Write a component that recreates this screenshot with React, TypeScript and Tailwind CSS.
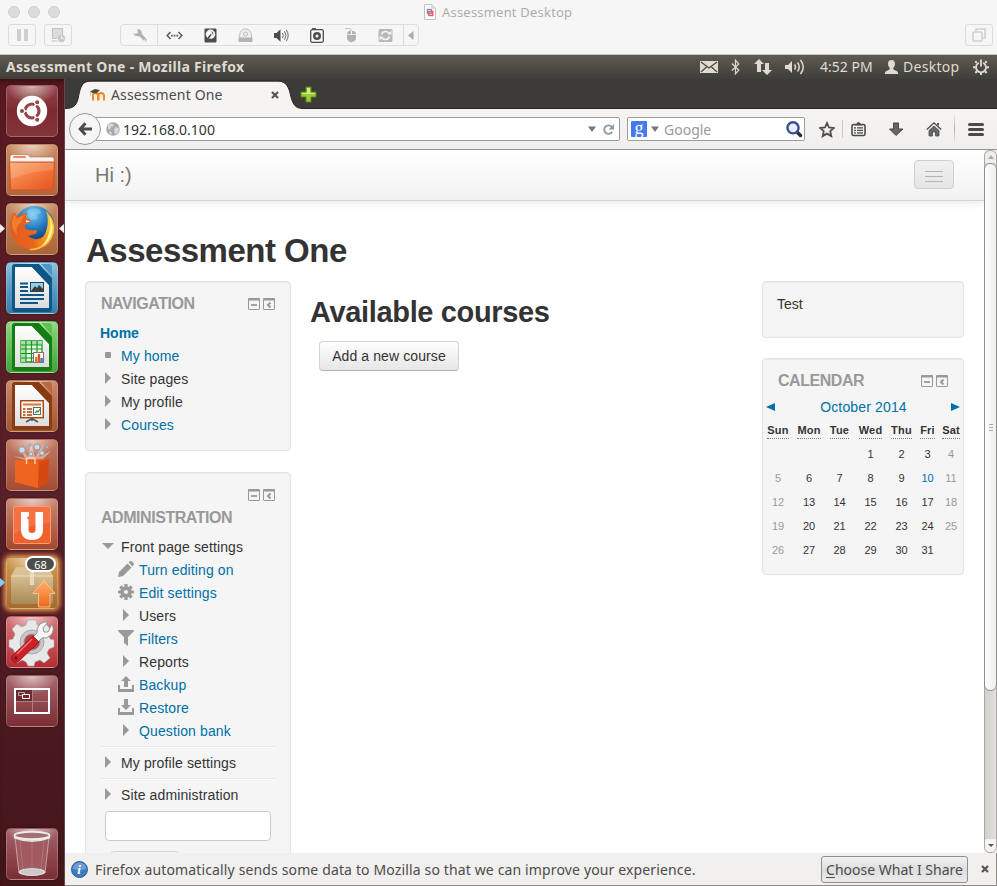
import React from 'react';

type Kids = { children?: React.ReactNode };

const ubuntu = "font-['Noto_Sans','Open_Sans',sans-serif]";

/* ---------- Virtual machine window chrome ---------- */

function MacHeader() {
  return (
    <header className="flex h-[55px] shrink-0 flex-col border-b border-[#c6c6c6] bg-[#f6f6f6]">
      <div className="flex h-[24px] items-center pb-px pl-2">
        <div className="flex gap-2">
          <i className="size-3 rounded-full border border-[#d0d0d0] bg-[#dcdcdc]" />
          <i className="size-3 rounded-full border border-[#d0d0d0] bg-[#dcdcdc]" />
          <i className="size-3 rounded-full border border-[#d0d0d0] bg-[#dcdcdc]" />
        </div>
        <div className="ml-[364px] flex items-center gap-[6px]">
          <svg width="12" height="16" viewBox="0 0 12 16">
            <path d="M.5.5h7.500l3.500 3.500v11.500H.5z" fill="#fafafa" stroke="#c4c4c4" />
            <path d="M8 .5v3.500h3.500" fill="#eee" stroke="#c4c4c4" />
            <rect x="3.500" y="5.500" width="4" height="4" fill="none" stroke="#6f93bb" strokeWidth="1.300" />
            <rect x="4.800" y="7.500" width="4" height="4" fill="none" stroke="#ff4b60" strokeWidth="1.300" />
          </svg>
          <span className="font-['Open_Sans',sans-serif] text-[13px] leading-[16px] tracking-[0.25px] text-[#a9a9a9]">
            Assessment Desktop
          </span>
        </div>
      </div>
      <div className="flex h-[22px] items-center px-2">
        <div className="flex h-[22px] w-[28px] items-center justify-center gap-[3px] rounded-[3px] border border-[#dcdcdc]">
          <i className="h-3 w-1 bg-[#cfcfcf]" />
          <i className="h-3 w-1 bg-[#cfcfcf]" />
        </div>
        <div className="ml-2 flex h-[22px] w-[28px] items-center justify-center rounded-[3px] border border-[#dcdcdc]">
          <svg width="16" height="16" viewBox="0 0 16 16">
            <path d="M3 2h9v6.500L8 11H3z" fill="#dcdcdc" />
            <path d="M12.500 8V1.500h-10V11.500H7" fill="none" stroke="#c4c4c4" strokeWidth="1.200" />
            <path d="M1.500 14h6" stroke="#ccc" strokeWidth="1.200" />
            <circle cx="11.500" cy="11.500" r="3.700" fill="#c8c8c8" />
            <path d="M11.500 9v2.800h2.200" fill="none" stroke="#f6f6f6" />
          </svg>
        </div>
        <div className="ml-[48px] flex h-[22px] w-[299px] items-center rounded-[4px] border border-[#dcdcdc]">
          <div className="flex h-full w-[37px] shrink-0 items-center justify-center border-r border-[#dcdcdc]">
            <svg width="15" height="15" viewBox="0 0 15 15">
              <path d="M5 1.500c2-.8 4.500.4 4.800 3l-.2 1.200 4.800 5.200c1 1.300-.8 3.200-2.200 2.200L7 7.900c-2.500.8-5.200-.4-5.800-2.700l2.900.7 2-1.700z" fill="#b2b2b2" />
              <circle cx="12.600" cy="12.300" r=".8" fill="#f6f6f6" />
            </svg>
          </div>
          <div className="flex w-[245px] shrink-0 items-center justify-between pl-[8px] pr-[10px]">
            <svg width="17" height="15" viewBox="0 0 17 15">
              <path d="M4.500 4L1.200 7.500 4.500 11M12.500 4l3.300 3.500-3.300 3.500" fill="none" stroke="#585858" strokeWidth="1.500" />
              <path d="M5 6.700h1.700v1.700H5zM7.700 6.700h1.700v1.700H7.700zM10.400 6.700h1.700v1.700h-1.700z" fill="#585858" />
            </svg>
            <svg width="13" height="15" viewBox="0 0 13 15">
              <rect x=".5" y=".5" width="12" height="14" rx="1" fill="#4d4d4d" />
              <circle cx="6.500" cy="6.200" r="4.700" fill="#f6f6f6" />
              <path d="M2 13l5-6.500M6 11l2 2" stroke="#4d4d4d" strokeWidth="1.600" />
              <path d="M8 3.500l1 3" stroke="#4d4d4d" strokeWidth="1" />
            </svg>
            <svg width="15" height="15" viewBox="0 0 15 15">
              <path d="M1.500 10C1.500 3.500 3.500 1 7.500 1s6 2.500 6 9" fill="#efefef" stroke="#bdbdbd" />
              <circle cx="7.500" cy="6" r="2" fill="none" stroke="#bdbdbd" />
              <rect x=".5" y="9.500" width="14" height="4.500" rx=".7" fill="#b5b5b5" />
            </svg>
            <svg width="16" height="15" viewBox="0 0 16 15">
              <path d="M1 5h2.500L7.500 1.200v12.600L3.500 10H1z" fill="#4d4d4d" />
              <path d="M9.500 5q1.600 2.500 0 5M11.500 3.300q3 4.200 0 8.400M13.200 1.800q4 5.700 0 11.400" fill="none" stroke="#666" />
            </svg>
            <svg width="14" height="15" viewBox="0 0 14 15">
              <rect x=".7" y="1.700" width="12.600" height="12.600" rx="1.500" fill="none" stroke="#4d4d4d" strokeWidth="1.300" />
              <path d="M2 .6h4" stroke="#4d4d4d" />
              <circle cx="7" cy="8" r="4" fill="#4d4d4d" />
              <circle cx="7" cy="8" r="1.500" fill="#f6f6f6" />
            </svg>
            <svg width="12" height="16" viewBox="0 0 12 16">
              <path d="M0 1.500h4q2 0 2.500 2.500" fill="none" stroke="#bdbdbd" />
              <path d="M2 8h9v3c0 5.500-9 5.500-9 0z" fill="#b2b2b2" />
              <path d="M2 7.200C2 5 3.500 3.800 6 3.800V7.200zM7 3.800c2.500 0 4 1.200 4 3.400H7z" fill="#b2b2b2" />
            </svg>
            <svg width="15" height="15" viewBox="0 0 15 15">
              <rect x=".5" y="1" width="14" height="13" rx="1.500" fill="#b8b8b8" />
              <path d="M3.500 6.500q.8-3 4-3 2.500 0 3.500 1.500M11.500 8.500q-.8 3-4 3-2.500 0-3.500-1.500" fill="none" stroke="#f6f6f6" strokeWidth="1.600" />
              <path d="M13.500 2.500v4h-4zM1.500 12.500v-4h4z" fill="#f6f6f6" />
            </svg>
          </div>
          <div className="flex h-full flex-1 items-center justify-center border-l border-[#dcdcdc]">
            <svg width="6" height="9" viewBox="0 0 6 9"><path d="M5.500 0v9L0 4.500z" fill="#adadad" /></svg>
          </div>
        </div>
        <div className="-mr-1 ml-auto flex h-[22px] w-[28px] items-center justify-center rounded-[3px] border border-[#dcdcdc]">
          <svg width="14" height="14" viewBox="0 0 14 14" fill="none" stroke="#cfcfcf" strokeWidth="1.600">
            <rect x="1" y="4" width="9" height="9" rx="1" />
            <path d="M4 3.500V1h9v9h-2.500" />
          </svg>
        </div>
      </div>
    </header>
  );
}

function UbuntuPanel() {
  return (
    <div className={`flex h-[24px] shrink-0 items-center bg-gradient-to-b from-[#5e5b52] to-[#3f3e39] pl-[6px] pr-[8px] text-[#dfdbd2] ${ubuntu}`}>
      <span className="whitespace-nowrap text-[14px] font-bold leading-[24px] tracking-[0.3px]">Assessment One - Mozilla Firefox</span>
      <svg className="ml-auto" width="18" height="12" viewBox="0 0 18 12">
        <rect width="18" height="12" fill="#dfdbd2" />
        <path d="M1 1l8 6 8-6M1 11l5.500-5M17 11l-5.500-5" fill="none" stroke="#48463f" strokeWidth="1.200" />
      </svg>
      <svg className="ml-[13px]" width="9" height="16" viewBox="0 0 9 16">
        <path d="M.8 4.500l7 6.500L4.500 14.800V1.200L7.800 5l-7 6.500" fill="none" stroke="#dfdbd2" strokeWidth="1.200" />
      </svg>
      <svg className="ml-[14px]" width="18" height="16" viewBox="0 0 18 16">
        <path d="M5 0l5 5H7v8H3V5H0zM13 16l-5-5h3V4h4v7h3z" fill="#dfdbd2" />
      </svg>
      <svg className="ml-[13px]" width="20" height="16" viewBox="0 0 20 16">
        <path d="M0 6h3l4-4v12l-4-4H0z" fill="#dfdbd2" />
        <path d="M9.500 5.500q2 2.500 0 5M12.500 3.500q3.500 4.500 0 9M15.500 1q5.500 7 0 14" fill="none" stroke="#dfdbd2" strokeWidth="1.500" />
      </svg>
      <span className="ml-[15px] w-[53px] whitespace-nowrap text-[14px] leading-[24px]">4:52 PM</span>
      <svg className="ml-[12px]" width="13" height="14" viewBox="0 0 13 14">
        <path d="M6.500 0C9 0 10 1.500 10 3.800 10 6 9 6.800 8.300 8c0 1.600.5 2 2.200 2.500 1.800.6 2.500 1.200 2.500 2.800v.7H0v-.7c0-1.600.7-2.200 2.500-2.800C4.200 10 4.700 9.600 4.700 8 4 6.800 3 6 3 3.800 3 1.500 4 0 6.500 0z" fill="#dfdbd2" />
      </svg>
      <span className="ml-[5px] w-[56px] whitespace-nowrap text-[14px] leading-[24px] tracking-[0.3px]">Desktop</span>
      <svg className="ml-[14px]" width="16" height="16" viewBox="0 0 16 16" fill="none" stroke="#dfdbd2">
        <path d="M5.800 3.800a5 5 0 1 0 4.400 0" strokeWidth="1.800" />
        <path d="M8 .5v7" strokeWidth="1.800" />
        <path d="M2.300 2.300l1.500 1.500M13.700 2.300l-1.500 1.500M0 8.300h2.500M13.500 8.300H16M2.300 14l1.700-1.700M13.700 14L12 12.300M8 16v-2.500" strokeWidth="2" />
      </svg>
    </div>
  );
}

/* ---------- Launcher ---------- */

function Tile({ className, children }: Kids & { className: string }) {
  return (
    <div className={`relative size-[52px] shrink-0 rounded-[5px] border border-white/20 bg-gradient-to-b shadow-[0_0_2px_rgba(0,0,0,0.5)] ${className}`}>
      <i className="absolute inset-x-0 top-0 h-[18px] rounded-t-[5px] bg-[radial-gradient(ellipse_at_top,rgba(255,255,255,0.6),rgba(255,255,255,0)_72%)]" />
      <svg className="absolute -left-px -top-px" width="52" height="52" viewBox="0 0 52 52">{children}</svg>
    </div>
  );
}

function Page({ dark, light }: { dark: string; light: string }) {
  return (
    <>
      <path d="M9 2h24l13 14v31q0 3-3 3H9q-3 0-3-3V5q0-3 3-3z" fill={dark} />
      <path d="M35 2h8q3 0 3 3v9z" fill={light} />
      <path d="M9 5h17l17 18v23H9z" fill="url(#paper)" />
      <path d="M26 5l17 18V19L30 4z" fill={dark} />
    </>
  );
}

function Launcher() {
  return (
    <aside className="relative flex w-[65px] shrink-0 flex-col gap-[7px] border-r border-[#65494f] bg-gradient-to-b from-[#59191f] via-[#58202a] to-[#421519] pb-[6px] pl-[6px] pt-[6px] shadow-[inset_0_5px_5px_-3px_rgba(0,0,0,0.5)]">
      <svg className="absolute" width="0" height="0">
        <defs>
          <linearGradient id="paper" x1="0" y1="0" x2="0" y2="1"><stop stopColor="#fff" /><stop offset="1" stopColor="#ddd" /></linearGradient>
          <linearGradient id="folder" x1="0" y1="0" x2="1" y2="1"><stop stopColor="#f8a86a" /><stop offset=".5" stopColor="#f3793e" /><stop offset="1" stopColor="#e5511d" /></linearGradient>
          <linearGradient id="fox" x1="0" y1="0" x2="1" y2="0"><stop stopColor="#e55b1c" /><stop offset=".6" stopColor="#ea641c" /><stop offset="1" stopColor="#f9a824" /></linearGradient>
          <radialGradient id="globe" cx=".45" cy=".2" r=".7"><stop stopColor="#7ccdf3" /><stop offset=".5" stopColor="#2a80c4" /><stop offset="1" stopColor="#123a78" /></radialGradient>
          <linearGradient id="box" x1="0" y1="0" x2="0" y2="1"><stop stopColor="#d8bd90" /><stop offset="1" stopColor="#a98a58" /></linearGradient>
          <linearGradient id="up" x1="0" y1="0" x2="0" y2="1"><stop stopColor="#ffb26b" /><stop offset="1" stopColor="#f0661d" /></linearGradient>
        </defs>
      </svg>
      <Tile className="from-[#93474b] via-[#7b2a30] to-[#84363b]">
        <circle cx="26" cy="26" r="15.200" fill="#fff" />
        <circle cx="26" cy="26" r="7" fill="none" stroke="#96454a" strokeWidth="3.200" />
        <path d="M26 26H12M26 26l7-12M26 26l7 12" stroke="#fff" strokeWidth="1.600" />
        <circle cx="26" cy="26" r="5" fill="#fff" />
        <g fill="#96454a" stroke="#fff" strokeWidth="1.100"><circle cx="16" cy="26" r="2.600" /><circle cx="31.200" cy="17.200" r="2.600" /><circle cx="31.200" cy="34.800" r="2.600" /></g>
      </Tile>
      <Tile className="from-[#c98b62] to-[#b4643a]">
        <path d="M4 13q0-2.500 2-2.500h15q2 0 3 2.500h22q2 0 2 2v8H4z" fill="#f6f4f2" stroke="#a65b39" strokeWidth=".5" />
        <rect x="7" y="12" width="13" height="2" rx="1" fill="#ee8a52" />
        <path d="M3.500 19q0-1 1-1h43q1 0 1 1l-1 25q0 2-2 2H6.500q-2 0-2-2z" fill="url(#folder)" stroke="#ce5528" />
        <path d="M4.500 19h43l-.4 7Q22 28 5.200 35z" fill="#fff" opacity=".15" />
      </Tile>
      <Tile className="from-[#c58a62] to-[#ad6538]">
        <circle cx="28.500" cy="22.500" r="19.500" fill="url(#globe)" />
        <path d="M22 7q6-3 11-1l2 4-5 2 2 4-7 1-4-4z" fill="#9adaf5" opacity=".4" />
        <path d="M40 8q10 9 8 21-3 13-15 17-6 2-10 1l8-8q8-4 10-14 2-9-1-17z" fill="#fbc02d" />
        <path d="M43 12q5 10 3 18-3 9-10 13 6-8 8-17 1-8-1-14z" fill="#fff49c" />
        <path d="M8 9l4 5q5-4 9-4l-1 5q4 1 5 4l-5 2q-3 2 0 5 4 2 10 1 2 2-1 4-4 1-7 2 6 5 13 2 5-3 8-9 0 11-8 17-11 6-22-1Q3 33 4 22q1-8 4-13z" fill="url(#fox)" />
        <path d="M8 11l3 5q5-4 9-4-4 3-5 7-6 5-4 13Q5 26 6 19z" fill="#f5923e" opacity=".6" />
        <path d="M20 17l4 1.500-4 1z" fill="#fff" />
      </Tile>
      <Tile className="from-[#88bdd7] to-[#337cac]">
        <Page dark="#0d5788" light="#4d97c3" />
        <path d="M14 21.500h8M14 25h8M14 29h8M14 33h24M14 37h24M14 41h18" stroke="#0d5788" strokeWidth="2" />
        <rect x="24.500" y="20.500" width="13" height="9" fill="#91d1ef" stroke="#124864" />
        <path d="M25 29l4-5 2 2 2-3 4 4v2z" fill="#443c2e" />
      </Tile>
      <Tile className="from-[#8bd67b] to-[#3ba53b]">
        <Page dark="#157d15" light="#5fc14f" />
        <path d="M15 20h21v21H15z" fill="#f1fff0" stroke="#169719" strokeWidth="1.300" />
        <path d="M15 20h21v4H15zM15 24h5v17h-5z" fill="#a8dfa2" />
        <path d="M15 24h21M15 28h21M15 32.500h21M15 37h21M20 20v21M25.500 20v21M31 20v21" stroke="#169719" strokeWidth="1.200" />
        <rect x="27.500" y="31.500" width="10" height="10" fill="#fff" stroke="#777" />
        <path d="M29 36h2.500v5H29z" fill="#e57d25" /><path d="M31.700 33h2.500v8h-2.500z" fill="#d8591b" /><path d="M34.300 37h2.500v4h-2.500z" fill="#2b83c4" />
      </Tile>
      <Tile className="from-[#c88766] to-[#a35631]">
        <Page dark="#8a3b12" light="#b8693f" />
        <rect x="14.700" y="20.700" width="22.600" height="17" fill="#fdf4ee" stroke="#a44411" strokeWidth="1.400" />
        <path d="M17 24.500h18" stroke="#cf7a46" strokeWidth="2" />
        <path d="M17 29h2.500M17 32h2.500M17 35h2.500M21 29h5M21 32h5M21 35h5" stroke="#a44411" strokeWidth="1.400" />
        <rect x="27.500" y="27.500" width="7" height="7" fill="#fff" stroke="#666" /><path d="M29 33l2-2 1 1 2-3" stroke="#2d9c35" strokeWidth="1.300" fill="none" />
        <path d="M26 38.500l-6 3.500M26 38.500l6 3.500M26 38v3" stroke="#555" strokeWidth="1.600" />
      </Tile>
      <Tile className="from-[#c37a64] to-[#a44b33]">
        <path d="M25 23L7 17l12 2-6-12 9 11 3-14 4 14 9-13-5 13 12-6-9 9z" fill="#fff" opacity=".4" />
        <g fill="#c9ddea" stroke="#85949e" strokeWidth=".8"><circle cx="16" cy="11" r="3.200" /><circle cx="31" cy="8" r="3" /><circle cx="36" cy="14" r="2.300" /><circle cx="25" cy="15" r="2" /><circle cx="24" cy="6" r="1.200" /><circle cx="41" cy="8" r="1.200" /></g>
        <path d="M9 21l34-1-1 23-10 6-23-6z" fill="#e8541b" />
        <path d="M9 21l24 2-1 26-23-6z" fill="#ef651f" />
        <path d="M33 23l10-3-1 23-10 6z" fill="#d4490f" />
        <path d="M20.500 25v-5q0-1 1-1h6q1.500 0 1.500 1.500V25" fill="none" stroke="#ffd2ae" strokeWidth="1.500" />
      </Tile>
      <Tile className="from-[#c98670] to-[#a4472f]">
        <rect x="7.500" y="8.500" width="37" height="37" rx="2" fill="#f2602c" stroke="#ff9c75" />
        <path d="M8 9h36v16Q25 26 8 36z" fill="#fff" opacity=".12" />
        <path d="M15 14h8v4l-2.500 2 2 1.500V32q0 3 3.500 3t3.500-3V14H37v17q0 11-11 11T15 31z" fill="#fff" />
      </Tile>
      <div className="relative">
        <Tile className="from-[#d49d59] to-[#a66a2a] shadow-[0_0_5px_2px_#ef9c4f]">
          <path d="M5 19h42v26q0 2-2 2H7q-2 0-2-2z" fill="url(#box)" />
          <path d="M10 10h32l5 9H5z" fill="#d9c294" />
          <path d="M5 19h42" stroke="#e9d9b8" />
          <path d="M24 10h4v18h-4z" fill="#efe4cd" opacity=".8" />
          <path d="M38 23.500l11 13h-5V50H32.500V36.500h-5.500z" fill="url(#up)" stroke="#fbd09b" strokeWidth=".8" />
        </Tile>
        <span className={`absolute -top-px left-[19px] flex h-[16px] w-[31px] items-center justify-center rounded-full border-2 border-white bg-[#4d4d4d] text-[11px] leading-none text-white ${ubuntu}`}>68</span>
      </div>
      <Tile className="from-[#d4767a] to-[#b52b33]">
        <path d="M22 4h8l1 5 4 2 5-3 5 6-3 4 2 5 4 1v7l-5 2-2 4 3 5-6 5-4-3-5 2-1 4h-6l-2-4-4-2-5 3-5-5 3-5-2-4-4-2v-7l4-1 2-5-3-5 5-5 5 3 4-2z" fill="#e8e8e8" stroke="#aaa" strokeWidth=".6" />
        <circle cx="26" cy="26" r="12" fill="#c8c8c8" stroke="#aaa" />
        <circle cx="26" cy="26" r="8" fill="#b7444b" stroke="#999" />
        <path d="M46 8q3 6-1 11-4 4-9 3l-6 6-5-5 6-6q-1-5 3-9 4-3 8-2l-5 6 1 4 4 0z" fill="#f7f7f7" stroke="#888" strokeWidth=".9" />
        <path d="M27 20l6 6-20 19q-3 3-6 0-3-3 0-6z" fill="#ce2127" stroke="#8c1015" strokeWidth=".8" />
        <path d="M26 23L11 38" stroke="#f1797b" strokeWidth="1.500" /><circle cx="10" cy="42" r="1.700" fill="#7e1014" />
      </Tile>
      <Tile className="from-[#a6666c] to-[#7c2d35]">
        <rect x="9" y="14" width="17" height="12" fill="#6e2930" />
        <path d="M26.500 14v24M9 26.500h34" stroke="#a98085" strokeWidth="1" />
        <rect x="9" y="14" width="34" height="24" fill="none" stroke="#fff" strokeWidth="2" />
        <path d="M12.500 17.500h6v3h-6z" fill="none" stroke="#aaa" /><path d="M16.500 19.500h7v4h-7z" fill="#6e2930" stroke="#fff" />
      </Tile>
      <div className="mt-auto">
        <Tile className="from-[#a3646a] to-[#7c2c34]">
          <path d="M9 9h34l-4 36q-13 5-26 0z" fill="#a05a60" stroke="#d2b4b6" strokeWidth=".8" />
          <path d="M14 12l3 29M38 12l-3 29M26 13v28" stroke="#c28b8f" opacity=".5" />
          <ellipse cx="26" cy="44" rx="13" ry="3.300" fill="#c9c9c7" stroke="#e2e2e2" />
          <path d="M8 7.500q18 8 36 0v3q-18 7-36 0z" fill="#deded9" />
          <ellipse cx="26" cy="7.500" rx="17.500" ry="3.600" fill="#a27173" stroke="#efefef" strokeWidth="1.800" />
        </Tile>
      </div>
      <svg className="absolute left-0 top-[144px]" width="65" height="11" viewBox="0 0 65 11"><path d="M0 1l5 4.500L0 10zM64 1l-5 4.500 5 4.500z" fill="#eee" /></svg>
      <svg className="absolute left-0 top-[498px]" width="6" height="11" viewBox="0 0 6 11"><path d="M0 1l5 4.500L0 10z" fill="#7fd0f3" /></svg>
    </aside>
  );
}

/* ---------- Firefox chrome ---------- */

function TabStrip() {
  return (
    <div className="relative h-[30px] shrink-0 border-b border-[#24221f] bg-[#3c3b37]">
      <svg className="absolute left-0 top-0" width="245" height="31" viewBox="0 0 245 31">
        <path d="M0 29.500C8 29.500 11 27 13 20C15.500 7 17 2.500 26 2.500H213C222 2.500 224 9 226 18C228 26 231 29.500 238 29.500V31H0z" fill="#f5f4f3" />
        <path d="M0 29.500C8 29.500 11 27 13 20C15.500 7 17 2 26 2H213C222 2 224 9 226 18C228 26 231 29.500 238 29.500" fill="none" stroke="#2a2926" strokeWidth="1" />
      </svg>
      <div className={`relative flex h-full items-center pl-[24px] pt-[2px] text-[14px] text-[#4c4c4c] ${ubuntu}`}>
        <svg width="17" height="14" viewBox="0 0 17 14">
          <path d="M4 12.500V7.500q0-2.500 2.500-2.500T9 7.500v5M9.500 12.500V7.500Q9.500 5 12 5t3 2.500v5" fill="none" stroke="#f68a22" strokeWidth="2" />
          <path d="M1 3.500L6 1l5 1-3.500 3.500-4-.5z" fill="#4a4a4a" /><path d="M1.500 4v4" stroke="#e8c6a3" />
        </svg>
        <span className="ml-[5px] w-[112px] whitespace-nowrap leading-[28px] tracking-[0.15px]">Assessment One</span>
        <svg className="ml-[48px]" width="8" height="8" viewBox="0 0 8 8"><path d="M1 1l6 6M7 1L1 7" stroke="#555" strokeWidth="2.200" /></svg>
        <svg className="ml-[21px]" width="17" height="17" viewBox="0 0 17 17">
          <path d="M6 1h5v5h5v5h-5v5H6v-5H1V6h5z" fill="#9ccb36" stroke="#5b8818" />
          <path d="M7 2h3v5h5v1H2V7h5z" fill="#d3ea88" />
        </svg>
      </div>
    </div>
  );
}

function NavBar() {
  return (
    <div className={`flex h-[41px] shrink-0 items-center border-b border-[#97948f] bg-gradient-to-b from-[#f5f4f3] to-[#f0efed] pl-1 pr-[13px] ${ubuntu}`}>
      <div className="relative z-10 flex size-[32px] shrink-0 items-center justify-center rounded-full border border-[#8f9aa5] bg-[#f6f6f5]">
        <svg width="14" height="14" viewBox="0 0 14 14"><path d="M7.500 1.200L2.200 7l5.300 5.800M2.500 7H14" fill="none" stroke="#4b4b4b" strokeWidth="3" /></svg>
      </div>
      <div className="-ml-[6px] flex h-[24px] w-[525px] shrink-0 items-center rounded-[2px] border border-[#9c9c9c] bg-white pl-[10px] pr-[4px]">
        <svg width="14" height="14" viewBox="0 0 14 14">
          <circle cx="7" cy="7" r="6.800" fill="#a9a9a9" />
          <path d="M2 3q3-2 5-1l1 2-3 1-1 3-2-1zM9 5l4 1-1 5-3 1-1-3zM4 9l2 2-1 2-2-2z" fill="#d9d9d9" />
        </svg>
        <span className="ml-[3px] mt-[2px] text-[14px] leading-[22px] tracking-[0.05px] text-[#333]">192.168.0.100</span>
        <svg className="ml-auto" width="8" height="6" viewBox="0 0 8 6"><path d="M0 .5h8L4 6z" fill="#777" /></svg>
        <svg className="ml-[6px]" width="13" height="13" viewBox="0 0 13 13">
          <path d="M10.200 8.800A4.300 4.300 0 1 1 9.800 3.800" fill="none" stroke="#8c99a6" strokeWidth="1.800" /><path d="M12 1v5.500H6.500z" fill="#8c99a6" />
        </svg>
      </div>
      <div className="ml-[7px] flex h-[24px] w-[178px] shrink-0 items-center rounded-[2px] border border-[#9c9c9c] bg-white pl-[3px] pr-[1px]">
        <span className="flex size-4 items-center justify-center rounded-[1px] bg-[#4479f0] pb-[2px] font-['Liberation_Serif',serif] text-[18px] leading-none text-white">g</span>
        <svg className="ml-[4px]" width="8" height="6" viewBox="0 0 8 6"><path d="M0 .5h8L4 6z" fill="#777" /></svg>
        <span className="ml-[5px] mt-[2px] text-[14px] leading-[22px] text-[#9a9a9a]">Google</span>
        <svg className="ml-auto" width="18" height="18" viewBox="0 0 18 18">
          <path d="M11.500 11.500l4 4" stroke="#2c2c35" strokeWidth="3.400" strokeLinecap="round" />
          <circle cx="8" cy="7.800" r="5.600" fill="#e8edf8" stroke="#34508f" strokeWidth="2.400" />
        </svg>
      </div>
      <svg className="ml-[14px] shrink-0" width="16" height="17" viewBox="0 0 16 17"><path d="M8 2l2 4.500 4.800.5-3.600 3.200 1.100 4.900L8 12.600l-4.300 2.500 1.100-4.900L1.200 7 6 6.500z" fill="none" stroke="#4d4d4d" strokeWidth="1.800" /></svg>
      <i className="ml-[7px] h-[18px] w-px bg-[#c5ccd3]" />
      <svg className="ml-[8px] shrink-0" width="15" height="16" viewBox="0 0 15 16">
        <rect x="1" y="3.500" width="13" height="11" rx="1.500" fill="none" stroke="#4d4d4d" strokeWidth="1.600" />
        <path d="M3.500 4.500h8V3H9.500Q9 1 7.500 1T5.500 3H3.500z" fill="#4d4d4d" />
        <path d="M3 6.800h2M6 6.800h6M3 9.300h2M6 9.300h6M3 11.800h2M6 11.800h6" stroke="#4d4d4d" strokeWidth="1.300" />
      </svg>
      <svg className="ml-[23px] shrink-0" width="15" height="15" viewBox="0 0 15 15"><path d="M4.500 1h5v6H14l-7 6.500L.5 7h4z" fill="#666" stroke="#484848" /></svg>
      <svg className="ml-[22px] shrink-0" width="16" height="16" viewBox="0 0 16 16">
        <path d="M3 9.500L8 5l5 4.500V15H9.500v-4h-3v4H3z" fill="#686868" stroke="#4b4b4b" strokeWidth=".8" /><path d="M.8 8.500L8 1.800l7.200 6.700" fill="none" stroke="#4b4b4b" strokeWidth="1.300" /><path d="M11 2h2v3l-2-1.700z" fill="#4b4b4b" />
      </svg>
      <i className="ml-[12px] h-[32px] w-px bg-gradient-to-b from-transparent via-[#a8b4c0] to-transparent" />
      <div className="ml-auto flex w-[16px] shrink-0 flex-col gap-[2px]">
        <i className="h-[3px] rounded bg-[#4a4a4a]" /><i className="h-[3px] rounded bg-[#4a4a4a]" /><i className="h-[3px] rounded bg-[#4a4a4a]" />
      </div>
    </div>
  );
}

/* ---------- Moodle page ---------- */

function BlockActions() {
  return (
    <svg className="shrink-0" width="27" height="12" viewBox="0 0 27 12" fill="none" stroke="#999">
      <rect x=".5" y=".5" width="11" height="11" rx=".5" /><path d="M0 1.500h12" strokeWidth="2" /><path d="M3 7h6" strokeWidth="1.800" />
      <rect x="15.500" y=".5" width="11" height="11" rx=".5" /><path d="M15 1.500h12" strokeWidth="2" /><path d="M22.500 4.500L20 7l2.500 2.500" strokeWidth="2" />
    </svg>
  );
}

function Block({ className = '', children }: Kids & { className?: string }) {
  return <section className={`shrink-0 rounded-[4px] border border-[#e3e3e3] bg-[#f5f5f5] shadow-[inset_0_1px_1px_rgba(0,0,0,0.05)] ${className}`}>{children}</section>;
}

function Title({ children }: Kids) {
  return <h2 className="text-[16px] font-bold leading-[20px] tracking-[-0.45px] text-[#999]">{children}</h2>;
}

const Right = () => <svg width="6" height="12" viewBox="0 0 6 12"><path d="M0 0l6 6-6 6z" fill="#999" /></svg>;
const icons: Record<string, React.ReactNode> = {
  right: <Right />,
  square: <i className="size-[6px] rounded-[1px] bg-[#999]" />,
  down: <svg width="12" height="6" viewBox="0 0 12 6"><path d="M0 0h12L6 6z" fill="#999" /></svg>,
  pencil: <svg width="16" height="16" viewBox="0 0 16 16" fill="#999"><path d="M0 16l1-5 8.500-8.500 4 4L5 15zM10.500 1.500L12 .3q1-.6 2 .2l1.500 1.500q.8 1 .2 2L14.500 5.500z" /></svg>,
  gear: <svg width="16" height="16" viewBox="0 0 16 16"><g stroke="#999" strokeWidth="3.200"><path d="M8 0v16M0 8h16M2.300 2.300l11.400 11.400M13.700 2.300L2.300 13.700" /></g><circle cx="8" cy="8" r="5.800" fill="#999" /><circle cx="8" cy="8" r="2" fill="#f5f5f5" /></svg>,
  filter: <svg width="16" height="16" viewBox="0 0 16 16"><path d="M0 0h16v1l-6 6v9l-4-3V7L0 1z" fill="#999" /></svg>,
  backup: <svg width="16" height="16" viewBox="0 0 16 16" fill="#999"><path d="M8 0l5 5h-3v6H6V5H3zM0 9h2v4h12V9h2v7H0z" /></svg>,
  restore: <svg width="16" height="16" viewBox="0 0 16 16" fill="#999"><path d="M8 11L3 6h3V0h4v6h3zM0 9h2v4h12V9h2v7H0z" /></svg>,
};

function TreeRow({ icon, link, nested, children }: Kids & { icon: string; link?: boolean; nested?: boolean }) {
  return (
    <li className={`flex h-[23px] items-center ${nested ? 'pl-[18px]' : 'pl-0'}`}>
      <span className="flex w-[16px] shrink-0 items-center justify-center pb-[4px]">{icons[icon]}</span>
      <span className={`ml-[5px] whitespace-nowrap text-[14px] leading-[23px] tracking-[0.12px] ${link ? 'text-[#0070a8]' : 'text-[#333]'}`}>{children}</span>
    </li>
  );
}

const Rule = () => <i className="block h-[2px] border-b border-t border-b-white border-t-[#e7e7e7]" />;

const weeks = [
  ['', '', '', '1', '2', '3', '4'],
  ['5', '6', '7', '8', '9', '10', '11'],
  ['12', '13', '14', '15', '16', '17', '18'],
  ['19', '20', '21', '22', '23', '24', '25'],
  ['26', '27', '28', '29', '30', '31', ''],
];

function Calendar() {
  return (
    <Block className="h-[217px]">
      <div className="flex items-center justify-between px-[15px] pt-[12px]"><Title>CALENDAR</Title><BlockActions /></div>
      <div className="mt-[5px] flex h-[22px] items-center justify-between px-[3px] text-[14px] text-[#0070a8]">
        <svg width="9" height="8" viewBox="0 0 9 8"><path d="M9 0v8L0 4z" fill="#0070a8" /></svg>
        <span className="ml-px tracking-[0.15px]">October 2014</span>
        <svg width="9" height="8" viewBox="0 0 9 8"><path d="M0 0v8l9-4z" fill="#0070a8" /></svg>
      </div>
      <div className="mt-[5px] grid h-[19px] grid-cols-[30px_32px_29px_33px_29px_23px_24px] justify-items-center text-[11px] font-bold text-[#333]">
        {['Sun', 'Mon', 'Tue', 'Wed', 'Thu', 'Fri', 'Sat'].map((d) => (
          <span key={d} className="h-[16px] whitespace-nowrap border-b border-dotted border-[#777] leading-[14px] tracking-[0.2px]">{d}</span>
        ))}
      </div>
      {weeks.map((w, i) => (
        <div key={i} className="grid h-[24px] grid-cols-[30px_32px_29px_33px_29px_23px_24px] items-center justify-items-center text-[11px] leading-[24px]">
          {w.map((d, j) => (
            <span key={j} className={d === '10' ? 'text-[#0070a8]' : j === 0 || j === 6 ? 'text-[#999]' : 'text-[#333]'}>{d}</span>
          ))}
        </div>
      ))}
    </Block>
  );
}

function MoodlePage() {
  return (
    <div className="h-full min-w-0 flex-1 overflow-hidden bg-white font-['Liberation_Sans',Arial,sans-serif]">
      <nav className="flex h-[51px] items-center justify-between border-b border-[#d4d4d4] bg-gradient-to-b from-white to-[#f2f2f2] px-[30px] shadow-[0_1px_10px_rgba(0,0,0,0.1)]">
        <span className="text-[20px] text-[#777]">Hi :)</span>
        <div className="mb-px flex h-[29px] w-[40px] flex-col items-center justify-center gap-[4px] rounded-[4px] border border-[#cfcfcf] bg-gradient-to-b from-[#f1f1f1] to-[#e5e5e5] pt-[3px]">
          <i className="h-px w-[18px] bg-[#b4b4b4]" /><i className="h-px w-[18px] bg-[#b4b4b4]" /><i className="h-px w-[18px] bg-[#b4b4b4]" />
        </div>
      </nav>
      <div className="px-[20px] pt-[30px]">
        <h1 className="h-[40px] pl-px text-[33px] font-bold leading-[40px] tracking-[-0.5px] text-[#333]">Assessment One</h1>
        <div className="mt-[10px] flex">
          <div className="flex w-[206px] shrink-0 flex-col gap-[21px]">
            <Block className="h-[170px] px-[14px] pt-[12px]">
              <div className="flex items-center justify-between px-px"><Title>NAVIGATION</Title><BlockActions /></div>
              <ul className="mt-[8px]">
                <li className="h-[23px] text-[14px] font-bold leading-[23px] text-[#0070a8]">Home</li>
                <TreeRow icon="square" link>My home</TreeRow>
                <TreeRow icon="right">Site pages</TreeRow>
                <TreeRow icon="right">My profile</TreeRow>
                <TreeRow icon="right" link>Courses</TreeRow>
              </ul>
            </Block>
            <Block className="h-[440px] px-[14px] pt-[16px]">
              <div className="flex justify-end pr-px"><BlockActions /></div>
              <div className="mt-[7px] pl-px"><Title>ADMINISTRATION</Title></div>
              <ul className="mt-[8px]">
                <TreeRow icon="down">Front page settings</TreeRow>
                <TreeRow nested icon="pencil" link>Turn editing on</TreeRow>
                <TreeRow nested icon="gear" link>Edit settings</TreeRow>
                <TreeRow nested icon="right">Users</TreeRow>
                <TreeRow nested icon="filter" link>Filters</TreeRow>
                <TreeRow nested icon="right">Reports</TreeRow>
                <TreeRow nested icon="backup" link>Backup</TreeRow>
                <TreeRow nested icon="restore" link>Restore</TreeRow>
                <TreeRow nested icon="right" link>Question bank</TreeRow>
              </ul>
              <div className="pb-[4px] pt-[3px]"><Rule /></div>
              <ul><TreeRow icon="right">My profile settings</TreeRow></ul>
              <div className="pb-[4px] pt-[3px]"><Rule /></div>
              <ul><TreeRow icon="right">Site administration</TreeRow></ul>
              <div className="ml-[5px] mt-[4px] h-[30px] w-[166px] rounded-[4px] border border-[#ccc] bg-white" />
              <div className="ml-[10px] mt-[10px] h-[30px] w-[70px] rounded-[4px] border border-[#d0d0d0] bg-[#f8f8f8]" />
            </Block>
          </div>
          <div className="ml-[19px] flex-1 pt-[11px]">
            <h2 className="h-[40px] text-[29px] font-bold leading-[40px] tracking-[-0.35px] text-[#333]">Available courses</h2>
            <button className="ml-[9px] mt-[9px] h-[30px] w-[140px] whitespace-nowrap rounded-[4px] border border-[#d3d3d3] border-b-[#b3b3b3] bg-gradient-to-b from-white to-[#e6e6e6] text-[14px] tracking-[0.1px] text-[#333]">Add a new course</button>
          </div>
          <div className="flex w-[202px] shrink-0 flex-col gap-[20px]">
            <Block className="h-[57px] pl-[14px] pt-[11px] text-[14px] leading-[23px] text-[#333]">Test</Block>
            <Calendar />
          </div>
        </div>
      </div>
    </div>
  );
}

function ScrollBar() {
  return (
    <div className="flex h-full w-[13px] shrink-0 flex-col rounded-[6px] border border-[#aaa8a5] bg-gradient-to-r from-[#d3d1ce] to-[#e2e0dd]">
      <div className="flex h-[12px] items-center justify-center rounded-t-[6px] bg-[#efeeec]"><svg width="6" height="4" viewBox="0 0 6 4"><path d="M0 4h6L3 0z" fill="#aaa" /></svg></div>
      <div className="-mx-px flex h-[528px] flex-col items-center justify-center gap-[2px] rounded-[6px] border border-[#918f8c] bg-gradient-to-r from-[#fff] to-[#ededed]">
        <i className="h-px w-[4px] bg-[#aaa]" /><i className="h-px w-[4px] bg-[#aaa]" /><i className="h-px w-[4px] bg-[#aaa]" />
      </div>
      <div className="mt-auto flex h-[13px] items-center justify-center rounded-b-[6px] bg-[#f5f4f3]"><svg width="6" height="3" viewBox="0 0 6 3"><path d="M0 0h6L3 3z" fill="#555" /></svg></div>
    </div>
  );
}

function NotificationBar() {
  return (
    <footer className={`flex h-[33px] shrink-0 items-center border-b border-r border-[#8e8b87] bg-[#f1f0ee] pl-[6px] pr-[7px] text-[14px] text-[#4c4c4c] ${ubuntu}`}>
      <svg width="17" height="17" viewBox="0 0 17 17"><circle cx="8.500" cy="8.500" r="8" fill="#3d7cc0" stroke="#2b5d98" /><path d="M1.500 8q1-6.500 7-6.500t7 6.500q-7 2-14 0z" fill="#fff" opacity=".25" /><text x="6.200" y="13" fill="#fff" fontFamily="Liberation Serif" fontSize="13" fontStyle="italic" fontWeight="bold">i</text></svg>
      <span className="ml-[7px] whitespace-nowrap tracking-[0.14px]">Firefox automatically sends some data to Mozilla so that we can improve your experience.</span>
      <button className="ml-auto h-[27px] w-[147px] whitespace-nowrap rounded-[3px] border border-[#8e8e8e] bg-gradient-to-b from-[#f1f1f1] via-[#dedede] to-[#ececec]"><u className="underline-offset-2">C</u>hoose What I Share</button>
      <svg className="ml-[13px]" width="8" height="8" viewBox="0 0 8 8"><path d="M1 1l6 6M7 1L1 7" stroke="#555" strokeWidth="2.200" /></svg>
    </footer>
  );
}

export default function App() {
  return (
    <div className="flex h-[886px] w-[997px] flex-col overflow-hidden bg-white">
      <MacHeader />
      <UbuntuPanel />
      <div className="flex min-h-0 flex-1">
        <Launcher />
        <main className="flex min-w-0 flex-1 flex-col">
          <TabStrip />
          <NavBar />
          <div className="flex min-h-0 flex-1 bg-[#f0efed]">
            <MoodlePage />
            <ScrollBar />
          </div>
          <NotificationBar />
        </main>
      </div>
    </div>
  );
}
